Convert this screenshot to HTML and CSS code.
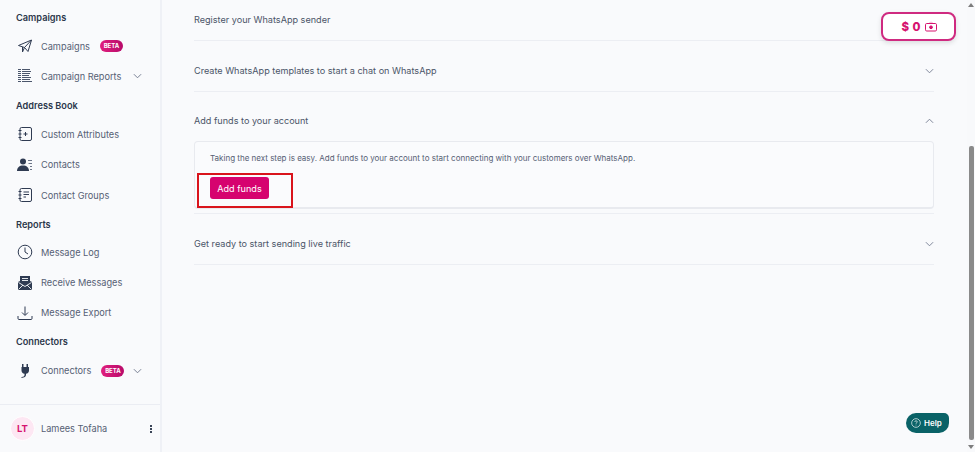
FILE: index.html
```html
<!DOCTYPE html>
<html>
  <head>
    <title>WhatsApp onboarding</title>
    <link rel="stylesheet" href="styles.css">
  </head>
  <body>
    <div class="page">
      <aside class="sidebar">
        <nav class="nav">
          <h4 class="nav-title first">Campaigns</h4>
          <a class="nav-item">
            <svg class="nav-icon" viewBox="0 0 16 16" fill="none" stroke="#2f3b52" stroke-width="1" stroke-linejoin="round"><path d="M1.500 7.500 14.500 2 11 13.500 7.500 9.500zM14.500 2 7.500 9.500 5.500 14V9"/></svg>
            <span>Campaigns</span>
            <span class="beta">BETA</span>
          </a>
          <a class="nav-item">
            <svg class="nav-icon" viewBox="0 0 16 16" fill="none" stroke="#4a556b" stroke-width="1"><path d="M1 1.500H4M1 3.500H4M1 5.500H4M1 7.500H4M1 9.500H4M1 11.500H4M1 13.500H4M5 1.500H13M5 3.500H14M5 5.500H13M5 7.500H12M5 9.500H14M5 11.500H13M5 13.500H15"/></svg>
            <span>Campaign Reports</span>
            <svg class="chevron" viewBox="0 0 10 6" fill="none" stroke="#6b7488" stroke-width="1"><path d="M1 1l4 4 4-4"/></svg>
          </a>

          <h4 class="nav-title">Address Book</h4>
          <a class="nav-item">
            <svg class="nav-icon" viewBox="0 0 16 16" fill="none" stroke="#2f3b52" stroke-width="1"><rect x="3" y="1.500" width="11.500" height="13" rx="1.500"/><path d="M1.500 4.500h3M1.500 8h3M1.500 11.500h3M8.500 6v4M6.500 8h4"/></svg>
            <span>Custom Attributes</span>
          </a>
          <a class="nav-item">
            <svg class="nav-icon" viewBox="0 0 16 16" fill="#2f3b52"><circle cx="6" cy="4.500" r="3"/><path d="M0 14c0-3.500 2.500-5.500 6-5.500s6 2 6 5.500z"/><path d="M11 3h4v1h-4zM11.500 6H15v1h-3.500zM13 9h2v1h-2zM13 12h2v1h-2z" fill="#6b7488"/></svg>
            <span>Contacts</span>
          </a>
          <a class="nav-item">
            <svg class="nav-icon" viewBox="0 0 16 16" fill="none" stroke="#2f3b52" stroke-width="1"><rect x="3" y="1.500" width="11.500" height="13" rx="1.500"/><path d="M1.500 4.500h3M1.500 8h3M1.500 11.500h3M6.500 5h5.500M6.500 7.500h5.500M6.500 10h2.500"/></svg>
            <span>Contact Groups</span>
          </a>

          <h4 class="nav-title title-tight">Reports</h4>
          <a class="nav-item">
            <svg class="nav-icon" viewBox="0 0 16 16" fill="none" stroke="#2f3b52" stroke-width="1"><circle cx="8" cy="8" r="6.800"/><path d="M8 3.500V8l3 2"/></svg>
            <span>Message Log</span>
          </a>
          <a class="nav-item">
            <svg class="nav-icon" viewBox="0 0 16 16" fill="#2f3b52"><path d="M3 1h10v5l2 1v8H1V7l2-1z"/><path d="M1.500 7.500 8 11.500l6.500-4M1.500 14.500 6 10M14.500 14.500 10 10M5 3.500h6M5 5.500h6" fill="none" stroke="#f9fafc" stroke-width=".9"/></svg>
            <span>Receive Messages</span>
          </a>
          <a class="nav-item">
            <svg class="nav-icon" viewBox="0 0 16 16" fill="none" stroke="#2f3b52" stroke-width="1"><path d="M8 1.500V10M5 7.500l3 3 3-3M1 11v2.500c0 .6.400 1 1 1h12c.6 0 1-.4 1-1V11"/></svg>
            <span>Message Export</span>
          </a>

          <h4 class="nav-title">Connectors</h4>
          <a class="nav-item">
            <svg class="nav-icon" viewBox="0 0 16 16" fill="#2f3b52"><path d="M5 1h1.500v3h3V1H11v3h1v3.500c0 2-1.300 3-3 3.300V12c0 1.500-1.500 2.500-4.500 3l-.2-.8c2.300-.4 3.200-1 3.200-2.200v-1.200c-1.700-.3-3-1.300-3-3.300V4h.5z"/></svg>
            <span>Connectors</span>
            <span class="beta">BETA</span>
            <svg class="chevron" viewBox="0 0 10 6" fill="none" stroke="#6b7488" stroke-width="1"><path d="M1 1l4 4 4-4"/></svg>
          </a>
        </nav>

        <div class="user">
          <span class="avatar">LT</span>
          <span class="user-name">Lamees Tofaha</span>
          <span class="dots"><i></i><i></i><i></i></span>
        </div>
      </aside>

      <main class="main">
        <section class="step step-first">
          <div class="step-head"><span>Register your WhatsApp sender</span></div>
        </section>

        <section class="step">
          <div class="step-head">
            <span>Create WhatsApp templates to start a chat on WhatsApp</span>
            <svg class="step-chevron" viewBox="0 0 10 6" fill="none" stroke="#747c90" stroke-width="1"><path d="M1 1l4 4 4-4"/></svg>
          </div>
        </section>

        <section class="step step-open">
          <div class="step-head">
            <span>Add funds to your account</span>
            <svg class="step-chevron" viewBox="0 0 10 6" fill="none" stroke="#747c90" stroke-width="1"><path d="M1 5l4-4 4 4"/></svg>
          </div>
          <div class="panel">
            <p>Taking the next step is easy. Add funds to your account to start connecting with your customers over WhatsApp.</p>
            <button class="btn-funds">Add funds</button>
            <div class="highlight"></div>
          </div>
        </section>

        <section class="step">
          <div class="step-head">
            <span>Get ready to start sending live traffic</span>
            <svg class="step-chevron" viewBox="0 0 10 6" fill="none" stroke="#747c90" stroke-width="1"><path d="M1 1l4 4 4-4"/></svg>
          </div>
        </section>
      </main>

      <div class="scrollbar">
        <span class="arrow-up"></span>
        <span class="thumb"></span>
        <span class="arrow-down"></span>
      </div>
    </div>

    <div class="balance">
      <span>$ 0</span>
      <svg viewBox="0 0 12 10" fill="none" stroke="#d6136f" stroke-width="1"><path d="M3.500 2 6 .5 8.500 2" stroke="#f3b6d2"/><rect x=".5" y="2" width="11" height="7.500" rx="1.200"/><circle cx="6" cy="5.800" r="1.400" fill="#d6136f"/></svg>
    </div>

    <button class="help">
      <svg viewBox="0 0 12 12" fill="none" stroke="#fff" stroke-width=".8"><circle cx="6" cy="6" r="5.200"/><path d="M4.500 4.700C4.500 3.800 5.200 3.300 6 3.300s1.500.5 1.500 1.300c0 1.100-1.500 1.100-1.500 2.300M6 8v.9"/></svg>
      Help
    </button>
  </body>
</html>
```

FILE: styles.css
```css
* {
  box-sizing: border-box;
}

html,
body {
  height: 100%;
}

body {
  margin: 0;
  overflow: hidden;
  font-family: Inter, "Liberation Sans", sans-serif;
  background-color: #f9fafc;
  color: #4b5568;
}

.page {
  display: flex;
  height: 452px;
}

/* sidebar */
.sidebar {
  width: 162px;
  flex: none;
  display: flex;
  flex-direction: column;
  border-right: 2px solid #eff1f6;
}

.nav {
  flex: 1;
  padding: 0 18px 0 16px;
}

.nav-title {
  margin: 0;
  height: 27.700px;
  line-height: 27.700px;
  font-size: 9.200px;
  font-weight: 600;
  color: #2c374b;
}

.nav-title.first {
  height: 17px;
  margin-top: 9px;
  line-height: 17px;
  margin-bottom: 5px;
}

.nav-title.title-tight {
  height: 27px;
  line-height: 29px;
}

.nav-item {
  display: flex;
  align-items: center;
  height: 30.300px;
  font-size: 9.200px;
  color: #566074;
}

.nav-icon {
  width: 16px;
  height: 16px;
  flex: none;
  margin: 0 8px 0 1px;
}

.beta {
  margin-left: 10px;
  width: 23px;
  height: 12px;
  line-height: 12px;
  text-align: center;
  border-radius: 6px;
  font-size: 6px;
  font-weight: 700;
  color: #fff;
  background: linear-gradient(90deg, #e0207e, #b80a6a);
}

.chevron {
  width: 9px;
  height: 6px;
  margin-left: auto;
}

.user {
  display: flex;
  align-items: center;
  height: 48px;
  padding-left: 10px;
  border-top: 1px solid #ebedf3;
}

.avatar {
  width: 25px;
  height: 25px;
  border-radius: 50%;
  margin-right: 6px;
  background-color: #fde7f3;
  border: 1px solid #fff;
  color: #d6136f;
  font-size: 9.500px;
  font-weight: 700;
  text-align: center;
  line-height: 23px;
}

.user-name {
  flex: 1;
  font-size: 9.200px;
  color: #566074;
}

.dots {
  display: flex;
  flex-direction: column;
  gap: 1px;
  margin-right: 8px;
}

.dots i {
  width: 2px;
  height: 2px;
  background-color: #3a4457;
}

/* steps */
.main {
  flex: 1;
  padding: 0 33px 0 32px;
  min-width: 0;
}

.step {
  border-bottom: 1px solid #eceef3;
}

.step-head {
  display: flex;
  align-items: center;
  justify-content: space-between;
  height: 50px;
  padding-top: 8px;
  font-size: 9.100px;
  color: #4b5568;
}

.step-first .step-head {
  height: 40px;
  padding: 0 0 2px;
}

.step-chevron {
  width: 9px;
  height: 6px;
  margin-top: 1px;
}

.step-open {
  padding-bottom: 4px;
}

.step-open .step-head {
  height: 49px;
  padding-top: 7px;
}

.panel {
  position: relative;
  height: 68px;
  padding: 11px 15px 0;
  background-color: #fafbfd;
  border: 1px solid #e8eaef;
  border-bottom-width: 2px;
  border-radius: 4px;
}

.panel p {
  margin: 0 0 13px;
  font-size: 8px;
  line-height: 11px;
  color: #566074;
}

.btn-funds {
  display: block;
  width: 59px;
  height: 22px;
  padding: 0;
  border: 0;
  border-radius: 3px;
  background-color: #d6036f;
  color: #fff;
  font-family: inherit;
  font-size: 9.100px;
}

/* red box drawn over the panel */
.highlight {
  position: absolute;
  left: 2px;
  top: 31px;
  width: 96px;
  height: 35px;
  border: 2px solid #d9141c;
}

/* fake browser scrollbar */
.scrollbar {
  width: 8px;
  flex: none;
  display: flex;
  flex-direction: column;
  align-items: center;
  background-color: #f8f9fb;
}

.arrow-up,
.arrow-down {
  width: 0;
  height: 0;
  flex: none;
  border-left: 3px solid transparent;
  border-right: 3px solid transparent;
}

.arrow-up {
  margin-top: 3px;
  border-bottom: 4px solid #7d7d7d;
}

.arrow-down {
  margin-bottom: 3px;
  border-top: 4px solid #7d7d7d;
}

.thumb {
  width: 5px;
  height: 295px;
  margin: 139px 0 5px;
  border-radius: 2px;
  background-color: #8a8a8a;
}

/* floating bits */
.balance {
  position: absolute;
  left: 881px;
  top: 12px;
  width: 75px;
  height: 29px;
  display: flex;
  align-items: center;
  justify-content: center;
  gap: 4px;
  padding-left: 1px;
  background-color: #fff;
  border: 2px solid #cf2a80;
  border-radius: 8px;
  box-shadow: 0 2px 5px rgba(0, 0, 0, 0.12);
  color: #d6136f;
  font-size: 11.500px;
  font-weight: 800;
  word-spacing: 1px;
}

.balance svg {
  width: 12px;
  height: 11px;
}

.help {
  position: absolute;
  left: 906px;
  top: 413px;
  width: 43px;
  height: 20px;
  display: flex;
  align-items: center;
  gap: 3px;
  padding: 0 0 0 5px;
  border: 0;
  border-radius: 10px 5px 10px 10px;
  background-color: #0a6267;
  color: #fff;
  font-family: inherit;
  font-size: 8px;
  font-weight: 600;
}

.help svg {
  width: 10px;
  height: 10px;
}
```
